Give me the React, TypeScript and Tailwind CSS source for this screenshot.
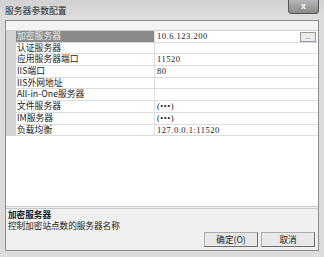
import React from "react";

type Row = { label: string; value: string; h: string };

const ROWS: Row[] = [
  { label: "加密服务器", value: "10.6.123.200", h: "h-[12px]" },
  { label: "认证服务器", value: "", h: "h-[11px]" },
  { label: "应用服务器端口", value: "11520", h: "h-[12px]" },
  { label: "IIS端口", value: "80", h: "h-[12px]" },
  { label: "IIS外网地址", value: "", h: "h-[11px]" },
  { label: "All-in-One服务器", value: "", h: "h-[12px]" },
  { label: "文件服务器", value: "(•••)", h: "h-[12px]" },
  { label: "IM服务器", value: "(•••)", h: "h-[12px]" },
  { label: "负载均衡", value: "127.0.0.1:11520", h: "h-[11px]" },
];

const cjk = "font-['Noto_Sans_CJK_SC','Liberation_Sans',sans-serif]";
const serif = "font-['Liberation_Serif','Noto_Sans_CJK_SC',serif]";

export default function App() {
  return (
    <div className={cn("flex h-[257px] w-[324px] flex-col bg-[#dcdcdc] text-[#1a1a1a]", cjk)}>
      {/* title bar */}
      <div className="flex h-[20px] items-start justify-between bg-gradient-to-b from-[#d2d2d2] to-[#dedede]">
        <span className="pl-[5px] pt-[5px] text-[8.8px] leading-[12px] text-[#2a2a2a]">服务器参数配置</span>
        <div className="mr-[5px] flex h-[14px] w-[31px] items-center justify-center rounded-b-[4px] border border-t-0 border-[#555] bg-gradient-to-b from-[#b8b8b8] to-[#8a8a8a]">
          <span className="font-['Liberation_Sans',sans-serif] text-[9px] font-bold leading-none text-white">x</span>
        </div>
      </div>

      {/* body */}
      <div className="flex flex-1 flex-col px-[5px] pb-[6px]">
        <div className="flex flex-1 flex-col border border-[#8d8d8d] bg-[#f0f0f0]">
          <div className="h-[10px] border-b border-[#cfcfcf] bg-[#f3f3f3]" />

          <div className="flex-1 bg-white">
            {ROWS.map((r, i) => (
              <div key={i} className={cn("flex", r.h)}>
                <div className="w-[10px] bg-[#d4d4d4]" />
                <div
                  className={cn(
                    "flex w-[139px] items-center border-r border-b border-[#dcdcdc] pl-[1px] text-[8.8px] leading-none",
                    i === 0 ? "bg-[#8a8a8a] text-[#ededed]" : "text-[#1a1a1a]"
                  )}
                >
                  {r.label}
                </div>
                <div className="flex flex-1 items-center border-b border-[#dcdcdc] pl-[2px]">
                  <span className={cn("text-[8.5px] leading-none tracking-[0.5px]", serif)}>{r.value}</span>
                  {i === 0 && (
                    <div className="ml-auto mr-[2px] flex h-[10px] w-[16px] items-end justify-center border border-[#9a9a9a] bg-[#ececec] pb-[1px] text-[6px] leading-none text-[#444]">
                      ...
                    </div>
                  )}
                </div>
              </div>
            ))}
          </div>

          {/* description pane */}
          <div className="flex h-[44px] flex-col border-t-[3px] border-double border-[#c8c8c8] bg-[#f0f0f0] pl-[2px]">
            <div className="text-[8.6px] font-bold leading-[11px]">加密服务器</div>
            <div className="text-[8.6px] leading-[11px]">控制加密站点数的服务器名称</div>
            <div className="mt-auto mb-[3px] flex justify-end gap-[3px] pr-[3px]">
              <button className="flex h-[15px] w-[54px] items-center justify-center border border-[#acacac] border-r-[#6e6e6e] border-b-[#6e6e6e] bg-[#e8e8e8] text-[8.6px] leading-none">
                确定(O)
              </button>
              <button className="flex h-[15px] w-[54px] items-center justify-center border border-[#acacac] border-r-[#6e6e6e] border-b-[#6e6e6e] bg-[#e8e8e8] text-[8.6px] leading-none">
                取消
              </button>
            </div>
          </div>
        </div>
      </div>
    </div>
  );
}

function cn(...c: (string | false | undefined)[]) {
  return c.filter(Boolean).join(" ");
}
